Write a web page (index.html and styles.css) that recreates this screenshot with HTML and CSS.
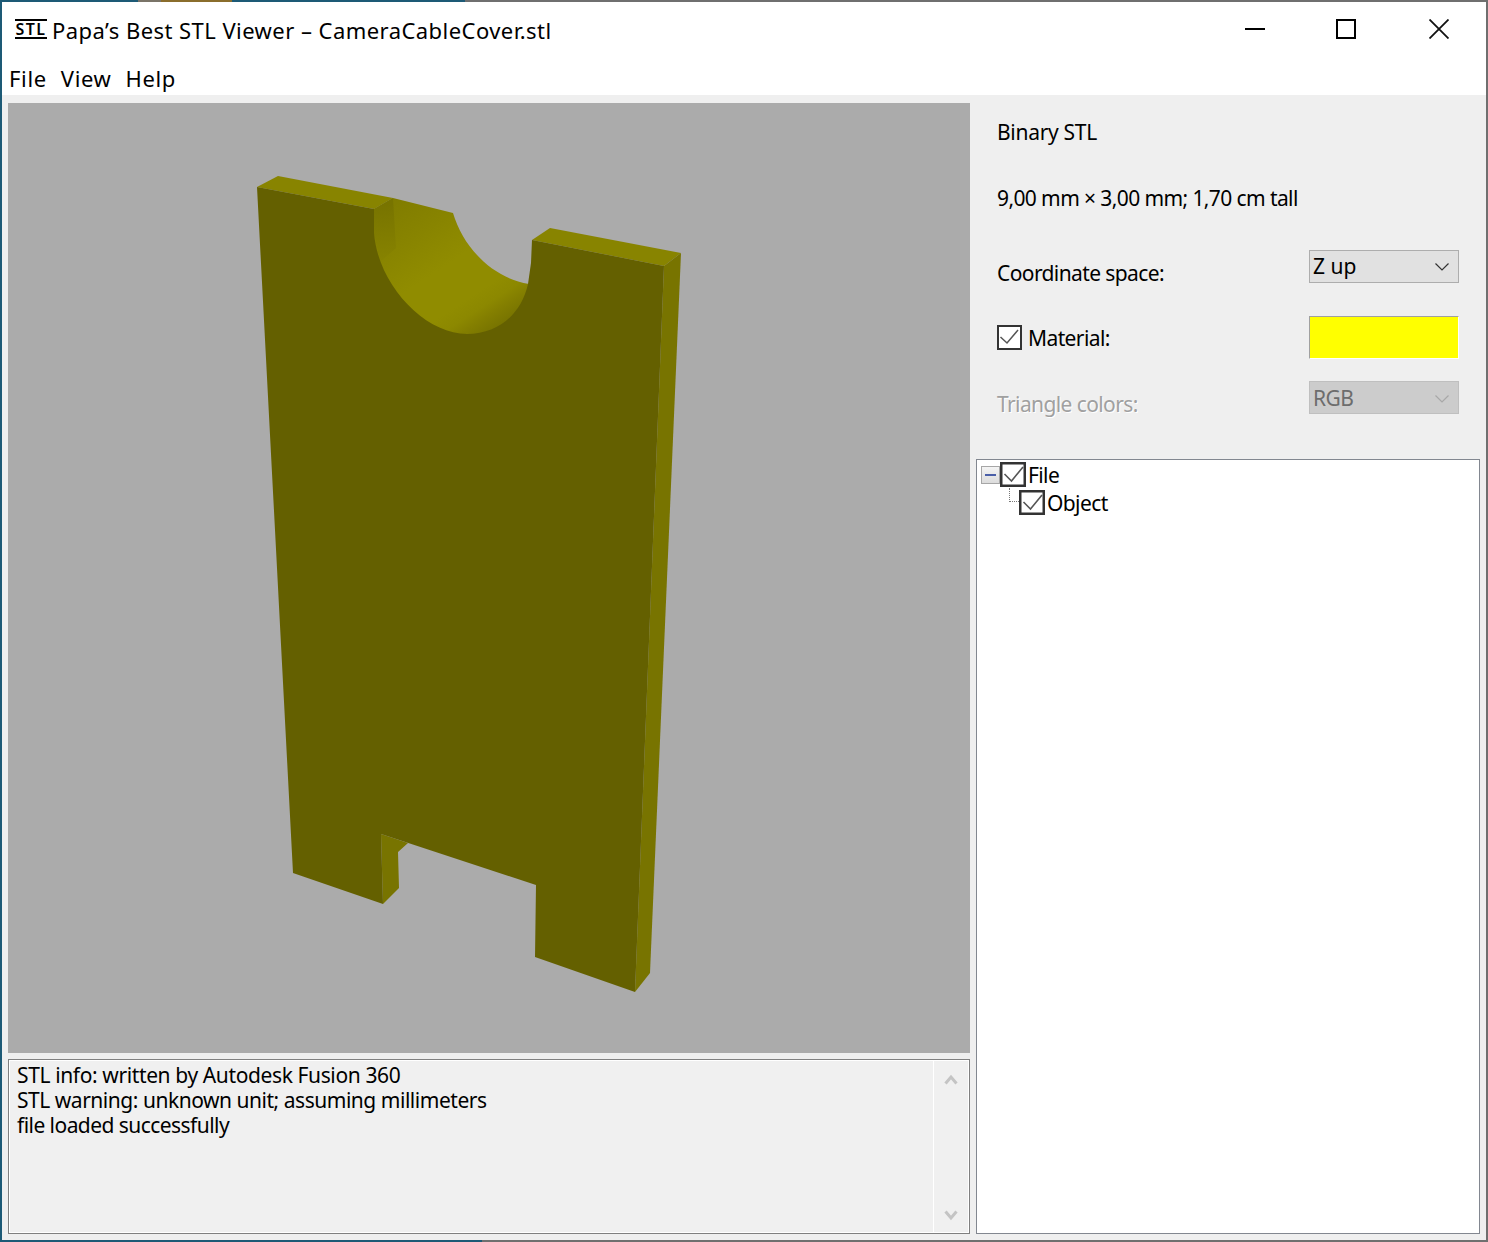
FILE: index.html
```html
<!DOCTYPE html>
<html lang="en">
<head>
<meta charset="utf-8">
<title>Papa's Best STL Viewer</title>
<link rel="stylesheet" href="styles.css">
</head>
<body>
<div class="window">
  <header class="titlebar">
    <div class="app-icon">STL</div>
    <div class="title">Papa’s Best STL Viewer – CameraCableCover.stl</div>
    <div class="controls">
      <svg class="ctl ctl-min" width="20" height="20" viewBox="0 0 20 20"><path d="M0 10h20" stroke="#000" stroke-width="2" fill="none"/></svg>
      <svg class="ctl" width="20" height="20" viewBox="0 0 20 20"><rect x="1" y="1" width="18" height="18" stroke="#000" stroke-width="2" fill="none"/></svg>
      <svg class="ctl" width="20" height="20" viewBox="0 0 20 20"><path d="M.5.5l19 19M19.500.5l-19 19" stroke="#111" stroke-width="1.800" fill="none"/></svg>
    </div>
  </header>
  <nav class="menu"><span>File</span><span>View</span><span>Help</span></nav>
  <main class="main">
    <section class="left">
      <div class="viewport">
        <svg class="model" viewBox="8 103 962 950" width="962" height="950">
          <defs>
            <linearGradient id="bore" gradientUnits="userSpaceOnUse" x1="393" y1="198" x2="483" y2="336">
              <stop offset="0" stop-color="#807c00"/>
              <stop offset=".27" stop-color="#888400"/>
              <stop offset=".39" stop-color="#8c8800"/>
              <stop offset=".52" stop-color="#908c00"/>
              <stop offset=".76" stop-color="#908c00"/>
              <stop offset=".85" stop-color="#8c8800"/>
              <stop offset=".91" stop-color="#847f00"/>
              <stop offset="1" stop-color="#787400"/>
            </linearGradient>
            <linearGradient id="wall" gradientUnits="userSpaceOnUse" x1="380" y1="205" x2="385" y2="265">
              <stop offset="0" stop-color="#787400"/>
              <stop offset="1" stop-color="#888400"/>
            </linearGradient>
          </defs>
          <polygon class="face-top" points="257,187 278,176 393,198 374,209"/>
          <polygon class="face-top" points="532,240 550,228 681,253 664,266"/>
          <polygon class="face-side" points="664,266 681,253 650,973 635,992"/>
          <path fill="url(#bore)" d="M393,198 L453,213 C463,247 492,278 529,284 L529,300 L500,345 L430,345 L370,270 L374,209 Z"/>
          <polygon fill="url(#wall)" points="374,209 393,198 395,232 396,248 380,262 374,233"/>
          <polygon class="face-side" points="381,834 408,843 398,852 399,888 383,904"/>
          <path class="face-front" d="M257,187 L374,209 L374,233 C378,285 425,334 467,334 C500,334 522,312 528,284 L531,263 L532,240 L664,266 L635,992 L535,957 L536,885 L381,834 L383,904 L293,873 Z"/>
        </svg>
      </div>
      <div class="log">
        <div class="log-text">
          <div class="log-first">STL info: written by Autodesk Fusion 360</div>
          <div>STL warning: unknown unit; assuming millimeters</div>
          <div class="log-last">file loaded successfully</div>
        </div>
        <div class="scroll">
          <svg width="14" height="11" viewBox="0 0 14 11"><path d="M1.500 9.500L7 3l5.500 6.500" stroke="#c4c4c4" stroke-width="3" fill="none"/></svg>
          <svg width="14" height="11" viewBox="0 0 14 11"><path d="M1.500 1.500L7 8l5.500-6.500" stroke="#c4c4c4" stroke-width="3" fill="none"/></svg>
        </div>
      </div>
    </section>
    <aside class="right">
      <div class="form">
        <div class="info info-binary">Binary STL</div>
        <div class="info info-size">9,00 mm × 3,00 mm; 1,70 cm tall</div>
        <div class="row row-coord">
          <span class="label label-low">Coordinate space:</span>
          <div class="select"><span class="select-on">Z up</span>
            <svg class="chev" width="14" height="8" viewBox="0 0 14 8"><path d="M.5.500L7 7l6.500-6.500" stroke="#333" stroke-width="1.200" fill="none"/></svg>
          </div>
        </div>
        <div class="row row-material">
          <span class="check-label">
            <svg class="check" width="25" height="25" viewBox="0 0 25 25"><rect x="1" y="1" width="23" height="23" fill="#fff" stroke="#333" stroke-width="2"/><path d="M3.500 12l6.500 6L21 5" stroke="#555" stroke-width="1.500" fill="none"/></svg>
            <span>Material:</span>
          </span>
          <div class="swatch"></div>
        </div>
        <div class="row row-tri">
          <span class="label label-low disabled">Triangle colors:</span>
          <div class="select select-off"><span>RGB</span>
            <svg class="chev" width="14" height="8" viewBox="0 0 14 8"><path d="M.5.500L7 7l6.500-6.500" stroke="#a8a8a8" stroke-width="1.200" fill="none"/></svg>
          </div>
        </div>
      </div>
      <div class="tree">
        <div class="node node-file">
          <span class="expander"><i></i></span>
          <svg class="check" width="26" height="25" viewBox="0 0 26 25"><rect x="1.250" y="1.250" width="23.500" height="22.500" fill="#fff" stroke="#333" stroke-width="2.500"/><path d="M4.500 12l7 7L23 5" stroke="#555" stroke-width="1.600" fill="none"/></svg>
          <span class="node-text">File</span>
        </div>
        <div class="node node-object">
          <span class="elbow"></span>
          <svg class="check" width="26" height="25" viewBox="0 0 26 25"><rect x="1.250" y="1.250" width="23.500" height="22.500" fill="#fff" stroke="#333" stroke-width="2.500"/><path d="M4.500 12l7 7L23 5" stroke="#555" stroke-width="1.600" fill="none"/></svg>
          <span class="node-text">Object</span>
        </div>
      </div>
    </aside>
  </main>
</div>
</body>
</html>
```

FILE: styles.css
```css
* { box-sizing: border-box; }
html, body { margin: 0; padding: 0; }
body {
  width: 1488px;
  height: 1242px;
  padding: 2px;
  background:
    linear-gradient(90deg, #1d5a76 138px, #7a7468 138px, #7a7468 161px, #8a6d2c 161px, #8a6d2c 232px, #1d5a76 232px, #1d5a76 465px, #6f6f6f 465px) top / 100% 2px no-repeat,
    linear-gradient(90deg, #1d5a76 482px, #6f6f6f 482px);
  overflow: hidden;
  font-family: "Noto Sans", "Open Sans", sans-serif;
  font-size: 21px;
  letter-spacing: -0.6px;
  color: #000;
}
.window {
  width: 1484px;
  height: 1238px;
  display: flex;
  flex-direction: column;
  background: #fff;
}
.titlebar {
  height: 52px;
  flex: none;
  display: flex;
  align-items: center;
  padding-left: 13px;
  font-size: 22px;
  letter-spacing: 0.45px;
}
.app-icon {
  width: 32px;
  height: 20px;
  margin-top: 2px;
  border-top: 2px solid #000;
  border-bottom: 2px solid #000;
  font-size: 16px;
  line-height: 16px;
  font-weight: 600;
  letter-spacing: 1.4px;
  text-align: center;
}
.title { margin-left: 5px; margin-top: 4px; line-height: 30px; }
.controls {
  margin-left: auto;
  margin-right: 37px;
  margin-top: 2px;
  display: flex;
  gap: 73px;
}
.ctl { display: block; }
.ctl-min { margin-right: -2px; }
.menu {
  height: 41px;
  flex: none;
  display: flex;
  gap: 14px;
  padding: 0 0 0 7px;
  line-height: 48px;
  font-size: 22px;
  letter-spacing: 0.65px;
}
.main {
  flex: 1;
  display: grid;
  grid-template-columns: 962px 504px;
  column-gap: 6px;
  padding: 8px 6px 6px;
  background: #efefef;
  min-height: 0;
}
.left { display: flex; flex-direction: column; gap: 6px; }
.viewport { height: 950px; background: #ababab; flex: none; }
.model { display: block; }
.face-front { fill: #646000; }
.face-side { fill: #787400; }
.face-top { fill: #888400; }
.log {
  height: 175px;
  display: flex;
  border: 1px solid #808080;
  outline: 1px solid #fff;
  outline-offset: -2px;
  background: #f0f0f0;
}
.log-text { flex: 1; padding: 3px 0 0 8px; line-height: 25px; letter-spacing: -0.47px; }
.log-first { letter-spacing: -0.38px; }
.log-last { letter-spacing: -0.55px; }
.scroll {
  width: 34px;
  border-left: 1px solid #fff;
  margin: 1px 2px 1px 0;
  display: flex;
  flex-direction: column;
  justify-content: space-between;
  align-items: center;
  padding: 13px 0 11px;
}
.scroll svg { display: block; }
.right { display: flex; flex-direction: column; }
.form { height: 356px; flex: none; padding: 14px 21px 0; }
.info { line-height: 30px; height: 30px; }
.info-binary { letter-spacing: -0.3px; }
.info-size { margin-top: 36px; }
.row {
  display: flex;
  justify-content: space-between;
}
.row-coord { height: 33px; margin-top: 37px; }
.row-material { height: 43px; margin-top: 33px; align-items: center; }
.row-tri { height: 33px; margin-top: 22px; }
.label { line-height: 30px; }
.label-low { padding-top: 8px; }
.disabled { color: #a0a0a0; text-shadow: 1px 1px 0 #fff; }
.select {
  width: 150px;
  height: 33px;
  display: flex;
  align-items: center;
  justify-content: space-between;
  padding: 0 9px 2px 3px;
  background: #e1e1e1;
  border: 1px solid #adadad;
  line-height: 30px;
}
.select-on { letter-spacing: 0; }
.chev { margin-top: 2px; }
.select-off { padding-bottom: 0; background: #cccccc; border-color: #bfbfbf; color: #6d6d6d; }
.check-label { display: flex; align-items: center; gap: 6px; line-height: 30px; }
.check { display: block; flex: none; }
.swatch {
  width: 150px;
  height: 43px;
  background: #ffff00;
  border-top: 1px solid #a0a0a0;
  border-left: 1px solid #a0a0a0;
  border-right: 1px solid #fff;
  border-bottom: 1px solid #fff;
}
.tree {
  height: 775px;
  flex: none;
  background: #fff;
  border: 1px solid #828790;
  padding: 2px 0 0 4px;
}
.node { display: flex; align-items: center; height: 25px; line-height: 25px; }
.node-object { margin-top: 3px; padding-left: 38px; position: relative; }
.node-text { margin-left: 2px; padding-top: 2px; }
.expander {
  width: 19px;
  height: 18px;
  border: 1px solid #a6a6a6;
  background: linear-gradient(#f4f4f4, #dcdcdc);
  display: flex;
  align-items: center;
  justify-content: center;
}
.expander i { display: block; width: 11px; height: 2px; background: #4a5fa8; }
.elbow {
  position: absolute;
  left: 28px;
  top: -2px;
  width: 10px;
  height: 14px;
  border-left: 1px dotted #777;
  border-bottom: 1px dotted #777;
}
```
